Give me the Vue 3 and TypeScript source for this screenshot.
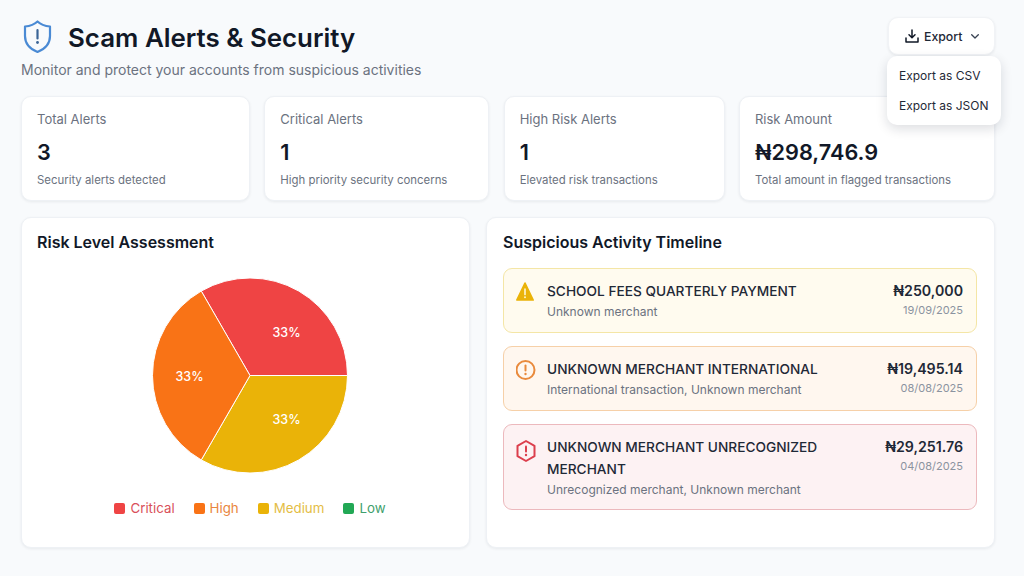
<template>
  <div class="page">
    <header class="head">
      <div>
        <div class="title-row">
          <svg class="shield" width="32" height="34" viewBox="0 0 32 34" fill="none">
            <path d="M16.500 1.500 C19.500 4.300 24 6 29 6.500 V16 C29 23.500 24.500 28.800 16.500 32 C8.500 28.800 4 23.500 4 16 V6.500 C9 6 13.500 4.300 16.500 1.500 Z" stroke="#4a8ad4" stroke-width="2.200" stroke-linejoin="round" />
            <path d="M16.500 10 V18.500" stroke="#3a6496" stroke-width="2.200" stroke-linecap="round" />
            <circle cx="16.500" cy="22.500" r="1.400" fill="#3a6496" />
          </svg>
          <h1>Scam Alerts &amp; Security</h1>
        </div>
        <p class="subtitle">Monitor and protect your accounts from suspicious activities</p>
      </div>
      <div class="export">
        <button class="export-btn">
          <svg width="14" height="14" viewBox="0 0 14 14" fill="none" stroke="#111827" stroke-width="1.500" stroke-linecap="round" stroke-linejoin="round">
            <path d="M7 1 V8.500 M4 5.800 L7 8.800 L10 5.800" />
            <path d="M1 9 V13 H13 V9" />
          </svg>
          <span>Export</span>
          <svg class="chev" width="8" height="5" viewBox="0 0 8 5" fill="none" stroke="#374151" stroke-width="1.300" stroke-linecap="round" stroke-linejoin="round">
            <path d="M0.700 0.700 L4 4 L7.300 0.700" />
          </svg>
        </button>
        <div class="menu">
          <div class="menu-item">Export as CSV</div>
          <div class="menu-item">Export as JSON</div>
        </div>
      </div>
    </header>

    <section class="stats">
      <div v-for="s in stats" :key="s.label" class="card stat">
        <div class="stat-label">{{ s.label }}</div>
        <div class="stat-value">{{ s.value }}</div>
        <div class="stat-note">{{ s.note }}</div>
      </div>
    </section>

    <section class="panels">
      <div class="card panel-left">
        <h2>Risk Level Assessment</h2>
        <div class="pie-wrap">
          <svg width="196" height="198" viewBox="0 0 196 198">
            <path d="M98 98.500 L49.250 14.060 A97.500 97.500 0 0 1 195.500 98.500 Z" fill="#ef4444" stroke="#fff" stroke-width="1" />
            <path d="M98 98.500 L195.500 98.500 A97.500 97.500 0 0 1 49.250 182.940 Z" fill="#eab308" stroke="#fff" stroke-width="1" />
            <path d="M98 98.500 L49.250 182.940 A97.500 97.500 0 0 1 49.250 14.060 Z" fill="#f97316" stroke="#fff" stroke-width="1" />
            <text x="134.500" y="60" class="pct">33%</text>
            <text x="37.500" y="104" class="pct">33%</text>
            <text x="134.500" y="147" class="pct">33%</text>
          </svg>
        </div>
        <div class="legend">
          <div v-for="l in legend" :key="l.name" class="legend-item" :style="{ color: l.text }">
            <i class="swatch" :style="{ background: l.color }"></i>{{ l.name }}
          </div>
        </div>
      </div>

      <div class="card panel-right">
        <h2>Suspicious Activity Timeline</h2>
        <div class="list">
          <div class="alert medium">
            <svg class="alert-icon" width="22" height="22" viewBox="0 0 22 22">
              <path d="M9 3 L17.200 20 H0.800 Z" fill="#eab308" stroke="#eab308" stroke-width="1.600" stroke-linejoin="round" />
              <path d="M9 9 V14.500" stroke="#fdf3c8" stroke-width="1.700" stroke-linecap="round" />
              <circle cx="9" cy="17.300" r="1" fill="#fdf3c8" />
            </svg>
            <div class="alert-body">
              <div class="alert-title">SCHOOL FEES QUARTERLY PAYMENT</div>
              <div class="alert-sub">Unknown merchant</div>
            </div>
            <div class="alert-side">
              <div class="amount">₦250,000</div>
              <div class="date">19/09/2025</div>
            </div>
          </div>

          <div class="alert high">
            <svg class="alert-icon" width="22" height="24" viewBox="0 0 22 24" fill="none">
              <circle cx="9.500" cy="12" r="9" stroke="#e98a3c" stroke-width="2" />
              <path d="M9.500 7.500 V12.500" stroke="#e98a3c" stroke-width="2" stroke-linecap="round" />
              <circle cx="9.500" cy="16" r="1.200" fill="#e98a3c" />
            </svg>
            <div class="alert-body">
              <div class="alert-title">UNKNOWN MERCHANT INTERNATIONAL</div>
              <div class="alert-sub">International transaction, Unknown merchant</div>
            </div>
            <div class="alert-side">
              <div class="amount">₦19,495.14</div>
              <div class="date">08/08/2025</div>
            </div>
          </div>

          <div class="alert critical">
            <svg class="alert-icon" width="22" height="28" viewBox="0 0 22 28" fill="none">
              <path d="M10 5 L18.500 9.800 V20.200 L10 25 L1.500 20.200 V9.800 Z" stroke="#dc3f4d" stroke-width="2" stroke-linejoin="round" />
              <path d="M10 10.500 V15.500" stroke="#dc3f4d" stroke-width="2" stroke-linecap="round" />
              <circle cx="10" cy="19" r="1.200" fill="#dc3f4d" />
            </svg>
            <div class="alert-body">
              <div class="alert-title">UNKNOWN MERCHANT UNRECOGNIZED MERCHANT</div>
              <div class="alert-sub">Unrecognized merchant, Unknown merchant</div>
            </div>
            <div class="alert-side">
              <div class="amount">₦29,251.76</div>
              <div class="date">04/08/2025</div>
            </div>
          </div>
        </div>
      </div>
    </section>
  </div>
</template>

<script setup lang="ts">
const stats = [
  { label: 'Total Alerts', value: '3', note: 'Security alerts detected' },
  { label: 'Critical Alerts', value: '1', note: 'High priority security concerns' },
  { label: 'High Risk Alerts', value: '1', note: 'Elevated risk transactions' },
  { label: 'Risk Amount', value: '₦298,746.9', note: 'Total amount in flagged transactions' },
]

const legend = [
  { name: 'Critical', color: '#ef4444', text: '#d9505a' },
  { name: 'High', color: '#f97316', text: '#e98640' },
  { name: 'Medium', color: '#eab308', text: '#e4bd45' },
  { name: 'Low', color: '#22a855', text: '#3f9f6d' },
]
</script>

<style>
html,
body {
  margin: 0;
  background: #f8fafc;
}
</style>

<style scoped>
.page {
  box-sizing: border-box;
  width: 1024px;
  height: 576px;
  padding: 17px 29px 28px 21px;
  background: #f8fafc;
  font-family: Inter, "Noto Sans", sans-serif;
  color: #111827;
  overflow: hidden;
}

.head {
  display: flex;
  justify-content: space-between;
  align-items: flex-start;
  height: 79px;
}

.title-row {
  display: flex;
  align-items: center;
  gap: 15px;
  height: 40px;
}

h1 {
  margin: 0;
  font-size: 25.900px;
  font-weight: 600;
  color: #111827;
}

.subtitle {
  margin: 4px 0 0;
  font-size: 14px;
  color: #6b7280;
}

.export {
  position: relative;
}

.export-btn {
  display: flex;
  align-items: center;
  box-sizing: border-box;
  width: 107px;
  height: 38px;
  padding: 0 0 0 16px;
  border: 1px solid #f1f3f6;
  border-radius: 10px;
  background: #fff;
  box-shadow: 0 1px 3px rgba(15, 23, 42, 0.08);
  font-family: inherit;
  font-size: 12.300px;
  font-weight: 500;
  color: #1f2937;
}

.export-btn span {
  margin-left: 5px;
}

.chev {
  margin-left: 9px;
}

.menu {
  position: absolute;
  z-index: 2;
  top: 39px;
  right: -6px;
  box-sizing: border-box;
  width: 114px;
  height: 69px;
  padding: 5px 0 0 12px;
  border-radius: 10px;
  background: #fff;
  box-shadow: 0 4px 12px rgba(15, 23, 42, 0.14);
}

.menu-item {
  height: 30px;
  line-height: 30px;
  font-size: 12px;
  color: #1f2937;
  white-space: nowrap;
}

.card {
  box-sizing: border-box;
  border: 1px solid #eef1f5;
  border-radius: 10px;
  background: #fff;
  box-shadow: 0 1px 3px rgba(15, 23, 42, 0.07);
}

.stats {
  display: grid;
  grid-template-columns: 229px 225px 221px 256px;
  justify-content: space-between;
  height: 105px;
}

.stat {
  padding: 14px 15px 0;
}

.stat-label {
  font-size: 13px;
  line-height: 17px;
  color: #6b7280;
}

.stat-value {
  margin-top: 9px;
  font-size: 21.700px;
  line-height: 30px;
  font-weight: 600;
  color: #111827;
}

.stat-note {
  margin-top: 5px;
  font-size: 11.400px;
  line-height: 16px;
  color: #6b7280;
}

.panels {
  display: grid;
  grid-template-columns: 449px 509px;
  justify-content: space-between;
  height: 331px;
  margin-top: 16px;
}

h2 {
  margin: 0;
  font-size: 16px;
  line-height: 20px;
  font-weight: 600;
  color: #111827;
}

.panel-left {
  padding: 14px 15px 0;
}

.pie-wrap {
  display: flex;
  justify-content: center;
  margin-top: 25px;
  padding-left: 9px;
}

.pct {
  fill: #fff;
  font-size: 12.500px;
  font-weight: 500;
  text-anchor: middle;
}

.legend {
  display: flex;
  justify-content: center;
  gap: 19px;
  margin-top: 25px;
  padding-left: 9px;
  font-size: 13.300px;
}

.legend-item {
  display: flex;
  align-items: center;
  gap: 5px;
}

.swatch {
  width: 11px;
  height: 11px;
  border-radius: 2px;
}

.panel-right {
  padding: 14px 17px 0 16px;
}

.list {
  display: flex;
  flex-direction: column;
  gap: 13px;
  margin-top: 16px;
}

.alert {
  display: flex;
  box-sizing: border-box;
  min-height: 65px;
  padding: 11px 13px 9px 12px;
  border: 1px solid;
  border-radius: 9px;
}

.alert.medium {
  background: #fffbef;
  border-color: #f4e6a6;
}

.alert.high {
  background: #fff7ef;
  border-color: #f6d0a8;
}

.alert.critical {
  background: #fdf2f3;
  border-color: #ecb9bd;
}

.alert-icon {
  flex: none;
  margin-right: 9px;
}

.alert-body {
  flex: 1;
  max-width: 296px;
}

.alert-title {
  font-size: 13.700px;
  line-height: 22px;
  font-weight: 500;
  color: #1f2937;
}

.alert-sub {
  font-size: 12px;
  line-height: 20px;
  color: #6b7280;
}

.alert-side {
  margin-left: auto;
  text-align: right;
}

.amount {
  font-size: 14.200px;
  line-height: 22px;
  font-weight: 600;
  color: #1f2937;
}

.date {
  font-size: 11px;
  line-height: 17px;
  color: #8b93a0;
}
</style>
